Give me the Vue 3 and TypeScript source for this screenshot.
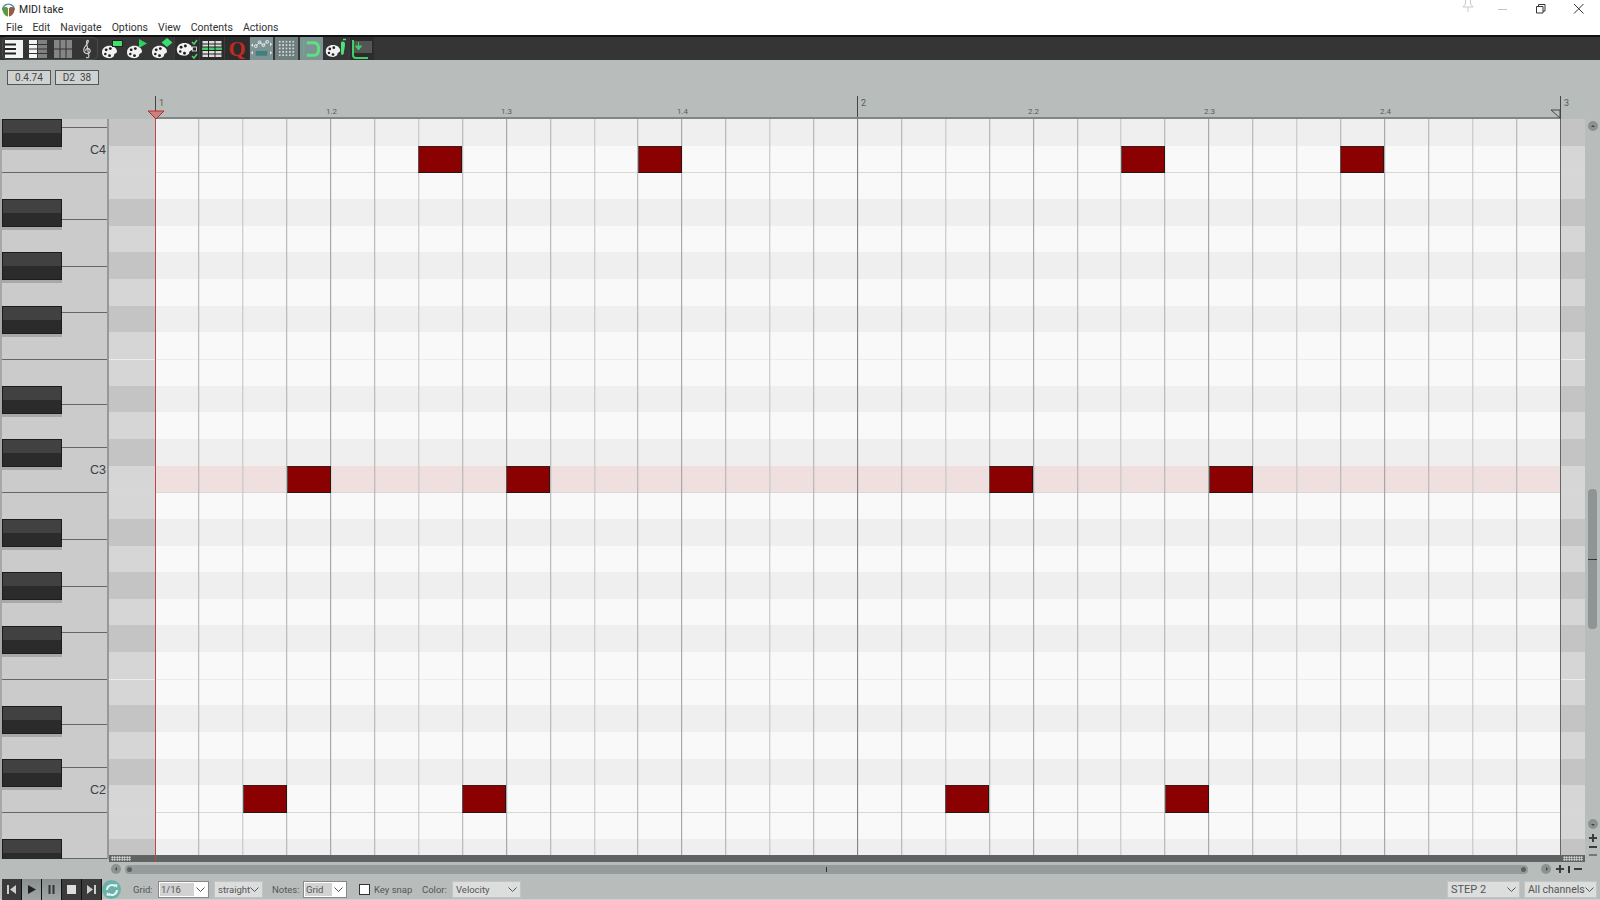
<template>
  <div class="app">
    <!-- title bar -->
    <div class="titlebar">
      <svg class="logo" width="15" height="16" viewBox="0 0 16 16">
        <path d="M1 8C1 4 4 1 8 1s7 3 7 7l-1.500 0C13.500 5 11 2.500 8 2.500S2.500 5 2.500 8z" fill="#3f8fa8" />
        <path d="M1.500 6c2-1.500 5-1.500 6 .5L7.500 15C4 14 1.500 11 1.500 6z" fill="#5c9a3c" />
        <path d="M14.500 6c-2-1.500-5-1.500-6 .5L8.500 15c3.500-1 6-4 6-9z" fill="#9a5a44" />
      </svg>
      <span class="title">MIDI take</span>
      <div class="winctl">
        <svg class="pin" width="14" height="14" viewBox="0 0 14 14">
          <path d="M3 0h8M4.500 0v5L2 8h10L9.500 5V0M7 8v5" fill="none" stroke="#c9c9c9" />
        </svg>
        <svg class="min" width="12" height="12" viewBox="0 0 12 12"><path d="M1 6.500h9" stroke="#c4c4c4" /></svg>
        <svg class="max" width="12" height="12" viewBox="0 0 12 12">
          <path d="M1.500 3.500h6.500v6.500H1.500zM3.500 3.500V1.500h6.500v6.500H8" fill="none" stroke="#333" />
        </svg>
        <svg class="close" width="12" height="12" viewBox="0 0 12 12"><path d="M1 1l9.500 9.500M10.500 1L1 10.500" stroke="#333" /></svg>
      </div>
    </div>

    <nav class="menubar">
      <span v-for="m in menus" :key="m">{{ m }}</span>
    </nav>

    <!-- toolbar -->
    <svg width="0" height="0" class="defs">
      <symbol id="pal" viewBox="0 0 20 18">
        <path d="M1 10C1 5 5 2 10 2s9 3 9 7c0 2-2 2-3 3s0 2-1 3-3 2-5 2c-5 0-9-2-9-7z" fill="#f2f2f2" />
        <circle cx="6" cy="7" r="1.700" fill="#222" />
        <circle cx="11" cy="5.500" r="1.700" fill="#222" />
        <circle cx="5" cy="12" r="1.500" fill="#222" />
        <circle cx="10" cy="14" r="1.700" fill="#222" />
      </symbol>
    </svg>
    <div class="toolbar">
      <div class="tb-group">
        <svg width="20" height="20" viewBox="0 0 20 20">
          <rect x="1" y="1" width="18" height="18" fill="#f4f4f4" />
          <path d="M1 5.500h11M1 10h11M1 14.500h11" stroke="#222" stroke-width="2" />
        </svg>
        <svg class="ml" width="20" height="20" viewBox="0 0 20 20">
          <rect x="1" y="1" width="8" height="18" fill="#f4f4f4" />
          <rect x="10" y="1" width="9" height="18" fill="#808080" />
          <path d="M1 5.500h18M1 10h18M1 14.500h18" stroke="#333" />
        </svg>
        <svg class="ml2" width="20" height="20" viewBox="0 0 20 20">
          <rect x="1" y="1" width="18" height="18" fill="#858585" />
          <path d="M7 1v18M13 1v18M1 10h18" stroke="#333" />
        </svg>
        <svg class="clef" width="12" height="20" viewBox="0 0 12 22">
          <path d="M5 20c2 1.500 3.500 0 3-2L5.500 4c-.3-2 1.500-3.500 2-2 .6 2-4.500 6-5 9-.5 3 1 5 4 5s4-3.500 2-5-5 0-3.500 2.500" fill="none" stroke="#cfcfcf" stroke-width="1.300" />
        </svg>
      </div>
      <div class="tb">
        <svg width="24" height="22" viewBox="0 0 24 22">
          <use href="#pal" x="1" y="6" width="17" height="15" />
          <rect x="12.500" y="2.500" width="10" height="6" fill="#3fe06a" stroke="#222" />
        </svg>
      </div>
      <div class="tb">
        <svg width="24" height="22" viewBox="0 0 24 22">
          <use href="#pal" x="1" y="6" width="17" height="15" />
          <path d="M14 1l8 4.500L14 10z" fill="#2fd063" />
        </svg>
      </div>
      <div class="tb">
        <svg width="24" height="22" viewBox="0 0 24 22">
          <use href="#pal" x="1" y="6" width="17" height="15" />
          <path d="M17 0l5.500 4.500L17 9l-5.500-4.500z" fill="#35e06c" />
        </svg>
      </div>
      <div class="tb cell">
        <svg width="24" height="22" viewBox="0 0 24 22">
          <use href="#pal" x="1" y="2" width="17" height="18" />
          <path d="M17 4l2 2 3-4M17 18l2 2 3-4" fill="none" stroke="#4fd070" stroke-width="1.500" />
          <rect x="17.500" y="9" width="4" height="4" fill="none" stroke="#ccc" />
        </svg>
      </div>
      <div class="tb cell">
        <svg width="22" height="20" viewBox="0 0 22 20">
          <rect x="1.500" y="2" width="19" height="16" fill="#dcdcdc" />
          <rect x="1.500" y="8" width="19" height="3.500" fill="#3fd068" />
          <path d="M1 5h20M1 8h20M1 11.500h20M1 15h20M7.500 2v16M14 2v16" stroke="#222" />
        </svg>
      </div>
      <div class="tb cell q">Q</div>
      <div class="tb teal">
        <svg width="24" height="22" viewBox="0 0 24 22">
          <path d="M6 8l4-4 4 3 4-4" fill="none" stroke="#d8e2e2" />
          <circle cx="6" cy="8" r="1.500" fill="none" stroke="#e8eeee" />
          <circle cx="10" cy="4" r="1.500" fill="none" stroke="#e8eeee" />
          <circle cx="14" cy="7" r="1.500" fill="none" stroke="#e8eeee" />
          <circle cx="18" cy="3.500" r="1.500" fill="none" stroke="#e8eeee" />
          <path d="M3 5l-2 2 2 2zM21 4l2 2-2 2zM3 13l-2 2 2 2zM21 13l2 2-2 2z" fill="#e8eeee" />
          <rect x="6" y="13" width="12" height="5" fill="#3f7f80" />
        </svg>
      </div>
      <div class="tb teal dark">
        <span class="dots"></span>
      </div>
      <div class="tb teal">
        <svg width="24" height="22" viewBox="0 0 24 22">
          <path d="M4 2v18" stroke="#4fd070" stroke-dasharray="2 1.500" />
          <path d="M7 3h8c4 0 6 3.500 6 8s-2 8-6 8H7v-3h8c2 0 3-2.500 3-5s-1-5-3-5H7z" fill="#5fe080" />
        </svg>
      </div>
      <div class="tb">
        <svg width="24" height="22" viewBox="0 0 24 22">
          <use href="#pal" x="0" y="5" width="16" height="15" />
          <path d="M16 5c0-2 4-2 4 1s-1 6-1 8c0 2-1 3-2 3s-1-2-1-4z" fill="#4fe07a" />
          <path d="M18 1.500h3" stroke="#4fe07a" stroke-width="1.500" />
        </svg>
      </div>
      <div class="tb cell">
        <svg width="24" height="22" viewBox="0 0 24 22">
          <rect x="4" y="3" width="18" height="12" fill="#555" />
          <path d="M3 2v15c0 2 1 3 3 3h12" fill="none" stroke="#3fd068" stroke-width="2" />
          <path d="M8.500 4v6M5.500 8l3 4 3-4z" fill="#3fd068" stroke="#3fd068" />
        </svg>
      </div>
    </div>

    <!-- ruler -->
    <div class="ruler">
      <div class="readout">0.4.74</div>
      <div class="readout">D2&nbsp;&nbsp;38</div>
      <span
        v-for="t in rulerLabels"
        :key="t.text"
        class="rlabel"
        :class="{ 'rlabel--bar': t.bar }"
        :style="{ left: t.x + 'px' }"
      >{{ t.text }}</span>
      <i class="rtick rtick--one"></i>
      <i class="rtick rtick--two"></i>
      <i class="rtick rtick--three"></i>
      <i class="rline"></i>
      <svg class="marker" width="18" height="10" viewBox="0 0 18 10">
        <path d="M1 1h16l-8 8z" fill="#c98080" stroke="#b03030" />
      </svg>
      <svg class="marker-end" width="10" height="10" viewBox="0 0 10 10">
        <path d="M0 1h9v8z" fill="#b8bdbc" stroke="#444" />
      </svg>
    </div>

    <!-- piano roll -->
    <div class="roll">
      <div class="piano">
        <div
          v-for="k in whiteKeys"
          :key="k.top"
          class="wkey"
          :style="{ height: k.height + 'px' }"
        >{{ k.label }}</div>
        <div
          v-for="top in blackKeys"
          :key="top"
          class="bkey"
          :style="{ top: top - 119 + 'px' }"
        ></div>
      </div>

      <div class="editor">
        <div class="rows">
          <div
            v-for="r in rows"
            :key="r.pitch"
            class="row"
            :class="{ 'row--black': r.black, 'row--under-c': r.underC, 'row--under-f': r.underF, 'row--active': r.active }"
          >
            <div class="gutter"></div>
            <div class="lane">
              <div
                v-for="n in r.notes"
                :key="n"
                class="note"
                :style="{ left: n * step + 'px', width: step + 'px' }"
              ></div>
            </div>
            <div class="gutter gutter--end"></div>
          </div>
          <i
            v-for="l in gridLines"
            :key="l.i"
            class="vline"
            :style="{ left: l.x + 'px', background: l.color }"
          ></i>
        </div>
        <div class="hbar">
          <i class="grip"></i>
          <i class="grip"></i>
        </div>
        <i class="cursor"></i>
      </div>

      <div class="vscroll">
        <span class="circ circ--up"><i class="tri tri--up"></i></span>
        <div class="vthumb"><i></i></div>
        <span class="circ circ--down"><i class="tri tri--down"></i></span>
        <span class="plus"></span>
        <span class="minus minus--a"></span>
        <span class="minus minus--b"></span>
      </div>
    </div>

    <!-- horizontal scroll -->
    <div class="hscroll">
      <span class="circ"><i class="tri tri--left"></i></span>
      <div class="htrack">
        <i class="hdot"></i>
        <i class="htick"></i>
        <i class="hdot"></i>
      </div>
      <span class="circ circ--right"><i class="tri tri--right"></i></span>
      <span class="plus plus--h"></span>
      <span class="bar"></span>
      <span class="minus minus--h"></span>
    </div>

    <!-- footer -->
    <div class="footer">
      <div class="transport">
        <button>
          <svg width="11" height="11" viewBox="0 0 11 11"><path d="M1 1h2v9H1zM10 1v9L4 5.500z" fill="#ccc" /></svg>
        </button>
        <button class="lit">
          <svg width="11" height="11" viewBox="0 0 11 11"><path d="M2 1l8 4.500L2 10z" fill="#222" /></svg>
        </button>
        <button class="lit">
          <svg width="11" height="11" viewBox="0 0 11 11"><path d="M2.500 1h2v9h-2zM6.500 1h2v9h-2z" fill="#333" /></svg>
        </button>
        <button>
          <svg width="11" height="11" viewBox="0 0 11 11"><rect x="1" y="1" width="9" height="9" fill="#ddd" /></svg>
        </button>
        <button>
          <svg width="11" height="11" viewBox="0 0 11 11"><path d="M8 1h2v9H8zM1 1v9l6-4.500z" fill="#ccc" /></svg>
        </button>
      </div>
      <div class="loop">
        <svg width="14" height="14" viewBox="0 0 14 14">
          <path d="M2 7a5 5 0 0 1 8.500-3.500M12 7a5 5 0 0 1-8.500 3.500" fill="none" stroke="#e6f4f2" stroke-width="2" />
          <path d="M9 1l3.500 .5L12 5zM5 13l-3.500-.5L2 9z" fill="#e6f4f2" />
        </svg>
      </div>

      <span class="lbl lbl--grid">Grid:</span>
      <div class="dd dd--white dd--grid"><em>1/16</em><svg viewBox="0 0 9 5"><path d="M.5 .5l4 4 4-4" /></svg></div>
      <div class="dd dd--straight"><span>straight</span><svg viewBox="0 0 9 5"><path d="M.5 .5l4 4 4-4" /></svg></div>
      <span class="lbl lbl--notes">Notes:</span>
      <div class="dd dd--white dd--notes"><em>Grid</em><svg viewBox="0 0 9 5"><path d="M.5 .5l4 4 4-4" /></svg></div>
      <span class="check"></span>
      <span class="lbl lbl--snap">Key snap</span>
      <span class="lbl lbl--color">Color:</span>
      <div class="dd dd--velocity"><span>Velocity</span><svg viewBox="0 0 9 5"><path d="M.5 .5l4 4 4-4" /></svg></div>

      <div class="dd dd--step"><span>STEP 2</span><svg viewBox="0 0 9 5"><path d="M.5 .5l4 4 4-4" /></svg></div>
      <div class="dd dd--channels"><span>All channels</span><svg viewBox="0 0 9 5"><path d="M.5 .5l4 4 4-4" /></svg></div>
    </div>
  </div>
</template>

<script setup lang="ts">
const menus = ['File', 'Edit', 'Navigate', 'Options', 'View', 'Contents', 'Actions']

const step = 1405 / 32
const gridLeft = 46

// note start in sixteenths, per pitch
const notesByPitch: Record<number, number[]> = {
  60: [6, 11, 22, 27],
  48: [3, 8, 19, 24],
  36: [2, 7, 18, 23],
}

const rows = Array.from({ length: 28 }, (_, i) => {
  const pitch = 61 - i
  const pc = pitch % 12
  return {
    pitch,
    black: [1, 3, 6, 8, 10].includes(pc),
    underC: pc === 11,
    underF: pc === 4,
    active: pitch === 48,
    notes: notesByPitch[pitch] ?? [],
  }
})

const gridLines = Array.from({ length: 31 }, (_, k) => {
  const i = k + 1
  let color = i % 2 ? '#bcbcbc' : '#cfcfcf'
  if (i % 4 === 0) color = '#a8a8a8'
  if (i % 16 === 0) color = '#858585'
  return { i, x: Math.floor(gridLeft + i * step), color }
})

const rulerLabels = [
  { text: '1', x: 159, bar: true },
  { text: '1.2', x: 326, bar: false },
  { text: '1.3', x: 501, bar: false },
  { text: '1.4', x: 677, bar: false },
  { text: '2', x: 861, bar: true },
  { text: '2.2', x: 1028, bar: false },
  { text: '2.3', x: 1204, bar: false },
  { text: '2.4', x: 1380, bar: false },
  { text: '3', x: 1564, bar: true },
]

const keyEdges = [119, 128, 173, 220, 267, 313, 360, 405, 448, 493, 540, 587, 633, 680, 725, 768, 813, 859]
const keyLabels: Record<number, string> = { 128: 'C4', 448: 'C3', 768: 'C2' }
const whiteKeys = keyEdges.slice(0, -1).map((top, i) => ({
  top,
  height: keyEdges[i + 1] - top,
  label: keyLabels[top] ?? '',
}))

const blackKeys = [119, 199, 252, 306, 386, 439, 519, 572, 626, 706, 759, 839]
</script>

<style>
html, body { margin: 0; background: #b8bdbc; }
</style>

<style scoped>
.app {
  width: 1600px;
  height: 900px;
  overflow: hidden;
  display: flex;
  flex-direction: column;
  background: #b8bdbc;
  font-family: Roboto, "Noto Sans", sans-serif;
  color: #333;
}
.defs { position: absolute; }

/* title + menu */
.titlebar {
  height: 17px;
  box-sizing: border-box;
  padding-top: 2px;
  background: #fff;
  display: flex;
  align-items: center;
}
.logo { margin-left: 1px; }
.title { margin-left: 3px; font-size: 10.500px; color: #222; }
.winctl { margin-left: auto; display: flex; align-items: center; margin-top: -2px; }
.pin { margin-right: 22px; margin-top: -6px; }
.min { margin-right: 26px; }
.max { margin-right: 26px; }
.close { margin-right: 15px; }
.menubar {
  height: 18px;
  box-sizing: border-box;
  padding: 2px 0 0 6px;
  background: #fff;
  display: flex;
  align-items: center;
  gap: 10px;
  font-size: 10.500px;
  color: #333;
}

/* toolbar */
.toolbar {
  height: 23px;
  border-top: 2px solid #111;
  background: #353535;
  display: flex;
}
.tb-group {
  width: 96px;
  margin: 0 1px 0 2px;
  box-sizing: border-box;
  border: 1px solid #4a4a4a;
  border-radius: 5px;
  display: flex;
  align-items: center;
  padding-left: 1px;
}
.ml { margin-left: 4px; }
.ml2 { margin-left: 5px; }
.clef { margin-left: 8px; }
.tb {
  width: 25px;
  height: 23px;
  display: flex;
  align-items: center;
  justify-content: center;
  flex: none;
}
.tb.cell { background: #2c2c2c; border-left: 1px solid #3b3b3b; box-sizing: border-box; }
.q {
  font-family: "Liberation Serif", serif;
  font-weight: 700;
  font-size: 22px;
  color: #c02a26;
}
.teal { background: #7d9292; width: 23px; margin: 0 1px; }
.teal.dark { background: #6f7e7e; }
.dots {
  width: 17px;
  height: 17px;
  background-image: radial-gradient(circle, #cfd8d8 0.9px, transparent 1px);
  background-size: 3.400px 3.400px;
}

/* ruler */
.ruler {
  position: relative;
  height: 59px;
  box-sizing: border-box;
  display: flex;
  gap: 4px;
  padding: 10px 0 0 7px;
  align-items: flex-start;
}
.readout {
  width: 44px;
  height: 15px;
  box-sizing: border-box;
  border: 1px solid #555;
  background: #cfd2d2;
  font-size: 10px;
  line-height: 13px;
  text-align: center;
  color: #444;
}
.rlabel {
  position: absolute;
  top: 47px;
  font-size: 8px;
  line-height: 10px;
  color: #5a5a5a;
}
.rlabel--bar { top: 38px; font-size: 9px; }
.rtick { position: absolute; top: 36px; bottom: 0; width: 1px; background: #444; }
.rtick--one { left: 155px; }
.rtick--two { left: 857px; }
.rtick--three { left: 1560px; }
.rline {
  position: absolute;
  left: 155px;
  width: 1405px;
  bottom: 0;
  height: 2px;
  background: #808585;
}
.marker { position: absolute; left: 147px; top: 50px; }
.marker-end { position: absolute; left: 1551px; top: 49px; }

/* piano */
.roll { display: flex; height: 743px; }
.piano {
  position: relative;
  width: 109px;
  height: 740px;
  flex: none;
  box-sizing: border-box;
  border-left: 2px solid #a4a8a8;
  border-right: 2px solid #989898;
  background: #cbcbcb;
  overflow: hidden;
}
.wkey {
  box-sizing: border-box;
  border-bottom: 1.500px solid #666;
  display: flex;
  align-items: center;
  justify-content: flex-end;
  padding-right: 1px;
  font-family: "Liberation Sans", sans-serif;
  font-size: 12.500px;
  color: #3c4048;
}
.bkey {
  position: absolute;
  left: 0;
  width: 60px;
  height: 28px;
  box-sizing: border-box;
  border: 1px solid #1c1c1c;
  background: linear-gradient(#414141 50%, #2b2b2b 50%);
  box-shadow: 0 3px 0 #a8a8a8;
}

/* note grid */
.editor { position: relative; width: 1476px; flex: none; }
.rows { position: relative; height: 736px; overflow: hidden; }
.row { display: flex; height: 26.667px; box-sizing: border-box; }
.gutter { width: 46px; flex: none; background: #d6d6d6; }
.gutter--end { width: 25px; }
.lane { position: relative; flex: 1; background: #f9f9f9; }
.row--black .gutter { background: #c4c4c4; }
.row--black .lane { background: #efefef; }
.row--active .lane { background: #f0dfdf; }
.row--under-c { border-top: 1px solid #d8d8d8; }
.row--under-f { border-top: 1px solid #ececec; }
.note {
  position: absolute;
  top: 0;
  bottom: -1px;
  z-index: 2;
  box-sizing: border-box;
  background: #8b0000;
  border: 1px solid #2a1414;
  border-left-color: #555;
  border-top-color: #3a1a1a;
}
.vline { position: absolute; top: 0; bottom: 0; width: 1px; z-index: 1; box-shadow: 1px 0 0 rgba(0, 0, 0, 0.06); }
.hbar {
  height: 7px;
  background: #5f6363;
  display: flex;
  justify-content: space-between;
  padding: 1px 2px;
  box-sizing: border-box;
}
.grip {
  width: 20px;
  background-image: radial-gradient(circle, #e4e4e4 0.8px, transparent 1px);
  background-size: 2.500px 2.500px;
}
.cursor {
  position: absolute;
  left: 46px;
  top: 0;
  bottom: 0;
  width: 1px;
  background: #b84a4a;
  z-index: 3;
}
.rows::after {
  content: "";
  position: absolute;
  left: 1451px;
  top: 0;
  bottom: 0;
  width: 1px;
  background: #666;
  z-index: 1;
}

/* scrollbars */
.vscroll {
  width: 15px;
  flex: none;
  display: flex;
  flex-direction: column;
  align-items: center;
}
.circ {
  width: 10px;
  height: 10px;
  flex: none;
  border-radius: 50%;
  background: #8c9292;
  display: flex;
  align-items: center;
  justify-content: center;
}
.circ--up { margin-top: 2px; }
.circ--down { margin-top: 190px; }
.tri { width: 0; height: 0; border: 2.500px solid transparent; }
.tri--up { border-bottom-color: #444; margin-top: -3px; }
.tri--down { border-top-color: #444; margin-top: 3px; }
.tri--left { border-right-color: #444; margin-left: -3px; }
.tri--right { border-left-color: #444; margin-left: 3px; }
.vthumb {
  width: 9px;
  height: 140px;
  margin-top: 358px;
  border-radius: 4px;
  background: #8f9595;
  display: flex;
  align-items: center;
}
.vthumb i { width: 100%; height: 1px; background: #333; }
.plus {
  position: relative;
  width: 8px;
  height: 8px;
  flex: none;
  margin-top: 5px;
  background:
    linear-gradient(#3c3c3c, #3c3c3c) center / 100% 2px no-repeat,
    linear-gradient(#3c3c3c, #3c3c3c) center / 2px 100% no-repeat;
}
.minus { height: 2px; width: 8px; flex: none; background: #3c3c3c; }
.minus--a { margin-top: 4px; }
.minus--b { margin-top: 6px; background: #777; }

.hscroll {
  height: 16px;
  display: flex;
  align-items: center;
  padding: 0 0 2px 111px;
  box-sizing: border-box;
}
.htrack {
  width: 1403px;
  height: 9px;
  margin-left: 4px;
  border-radius: 4px;
  background: #959a9a;
  display: flex;
  align-items: center;
  justify-content: space-between;
  padding: 0 2px;
  box-sizing: border-box;
}
.hdot { width: 5px; height: 5px; border-radius: 50%; background: #5c6060; }
.htick { width: 1px; height: 5px; background: #333; }
.circ--right { margin-left: 13px; }
.plus--h { margin: 0 0 0 5px; }
.bar { width: 2px; height: 7px; background: #333; margin-left: 4px; }
.minus--h { margin-left: 4px; }

/* footer */
.footer {
  height: 22px;
  display: flex;
  align-items: flex-start;
  font-size: 9.500px;
  color: #555;
  padding-left: 2px;
  box-shadow: inset 0 -1px 0 #cdd0d0;
}
.transport { display: flex; height: 21px; width: 100px; margin-top: 1px; background: #111; flex: none; }
.transport button {
  width: 20px;
  height: 21px;
  padding: 0;
  border: 0;
  border-right: 1px solid #111;
  background: #3b3b3b;
  display: flex;
  align-items: center;
  justify-content: center;
}
.transport button.lit { background: linear-gradient(#8a9090, #a0a5a5); }
.loop {
  width: 19px;
  height: 19px;
  flex: none;
  margin-top: 2px;
  border-radius: 50%;
  background: #6cb0aa;
  display: flex;
  align-items: center;
  justify-content: center;
}
.lbl { line-height: 22px; margin-top: 1px; white-space: nowrap; flex: none; }
.lbl--grid { margin-left: 12px; width: 25px; }
.lbl--notes { margin-left: 9px; width: 31px; }
.lbl--snap { margin-left: 4px; width: 48px; }
.lbl--color { width: 30px; }
.dd {
  height: 17px;
  margin-top: 3px;
  flex: none;
  box-sizing: border-box;
  border: 1px solid #c2c5c5;
  background: #dcdddd;
  display: flex;
  align-items: center;
  justify-content: space-between;
  padding: 0 3px 0 3px;
  font-size: 9.500px;
  color: #555;
  white-space: nowrap;
}
.dd svg { width: 9px; height: 5px; flex: none; fill: none; stroke: #555; }
.dd em { display: block; font-style: normal; background: #d2d2d2; padding-left: 1px; line-height: 13px; box-sizing: border-box; }
.dd--white { background: #fff; border-color: #888; padding-left: 1px; }
.dd--grid { width: 51px; margin-left: 0; }
.dd--grid em { width: 34px; }
.dd--straight { width: 49px; margin-left: 5px; }
.dd--notes { width: 44px; }
.dd--notes em { width: 27px; }
.check {
  width: 11px;
  height: 11px;
  margin: 6px 0 0 12px;
  flex: none;
  box-sizing: border-box;
  border: 1px solid #333;
  background: #fff;
}
.dd--velocity { width: 69px; }
.dd--step { width: 73px; margin-left: auto; margin-top: 3px; font-size: 11px; }
.dd--channels { width: 73px; margin: 3px 3px 0 4px; font-size: 10.500px; }
</style>
